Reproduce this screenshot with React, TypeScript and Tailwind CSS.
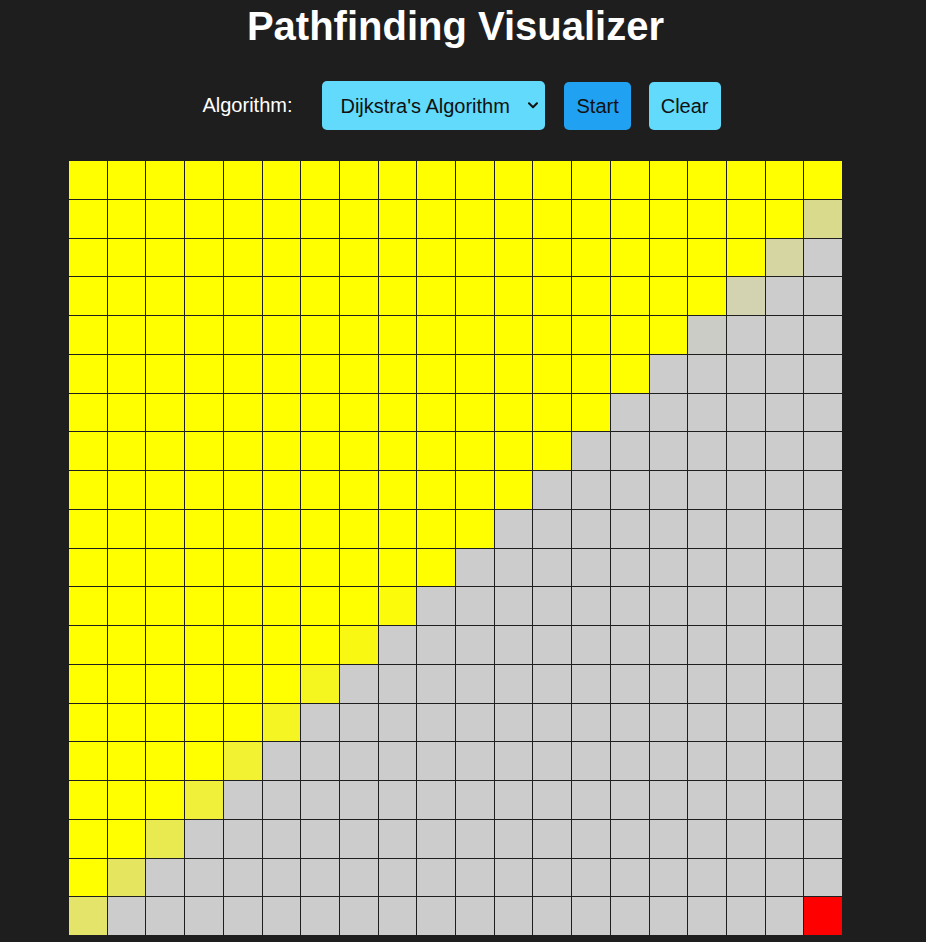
import React from "react";

const tints: Record<string, string> = {
  "1-19": "#dada8c",
  "2-18": "#d6d6a2",
  "3-17": "#d3d3b2",
  "4-16": "#cbccc6",
  "11-8": "#fcfc0a",
  "12-7": "#f8f812",
  "13-6": "#f5f520",
  "14-5": "#f5f524",
  "15-4": "#f2f232",
  "16-3": "#f0f03a",
  "17-2": "#e9e950",
  "18-1": "#e5e560",
  "19-0": "#e4e46a",
};

function cellColor(r: number, c: number): string {
  if (r === 19 && c === 19) return "#ff0000";
  const t = tints[`${r}-${c}`];
  if (t) return t;
  if (r + c <= 19) return "#ffff00";
  return "#cccccc";
}

export default function App() {
  const cells = [];
  for (let r = 0; r < 20; r++) {
    for (let c = 0; c < 20; c++) {
      cells.push(
        <div key={`${r}-${c}`} style={{ backgroundColor: cellColor(r, c) }} />
      );
    }
  }
  return (
    <div
      className="min-h-screen w-full bg-[#1e1e1e] text-white"
      style={{ fontFamily: '"Liberation Sans", Arial, sans-serif' }}
    >
      <div className="w-[911px] flex flex-col items-center">
        <h1 className="mt-[3px] text-[40px] leading-[46px] font-bold text-white">
          Pathfinding Visualizer
        </h1>
        <div className="mt-[32px] flex items-center pl-[12px] h-[49px]">
          <label className="text-[20px] leading-[23px] text-white mr-[30px]">
            Algorithm:
          </label>
          <div className="relative h-[49px] w-[223px]">
            <select
              className="appearance-none h-[49px] w-[223px] rounded-[5px] bg-[#61dafb] text-[20px] text-[#111] pl-[18px] pr-[20px] border-0 outline-none"
              style={{ fontFamily: '"Liberation Sans", Arial, sans-serif' }}
              defaultValue="dijkstra"
            >
              <option value="dijkstra">Dijkstra's Algorithm</option>
              <option value="astar">A* Algorithm</option>
              <option value="bfs">Breadth-First Search</option>
            </select>
            <svg
              className="pointer-events-none absolute right-[7px] top-[21px]"
              width="10"
              height="7"
              viewBox="0 0 10 7"
            >
              <path
                d="M1 1.2 L5 5.2 L9 1.2"
                fill="none"
                stroke="#111"
                strokeWidth="2"
                strokeLinecap="round"
                strokeLinejoin="round"
              />
            </svg>
          </div>
          <button className="ml-[19px] h-[48px] px-[12px] rounded-[5px] bg-[#21a1f1] text-[20px] text-[#111]">
            Start
          </button>
          <button className="ml-[18px] h-[48px] px-[12px] rounded-[5px] bg-[#61dafb] text-[20px] text-[#111]">
            Clear
          </button>
        </div>
        <div className="mt-[31px] grid grid-cols-[repeat(20,1fr)] grid-rows-[repeat(20,1fr)] gap-px bg-[#1e1e1e] w-[773px] h-[774px]">
          {cells}
        </div>
      </div>
    </div>
  );
}
